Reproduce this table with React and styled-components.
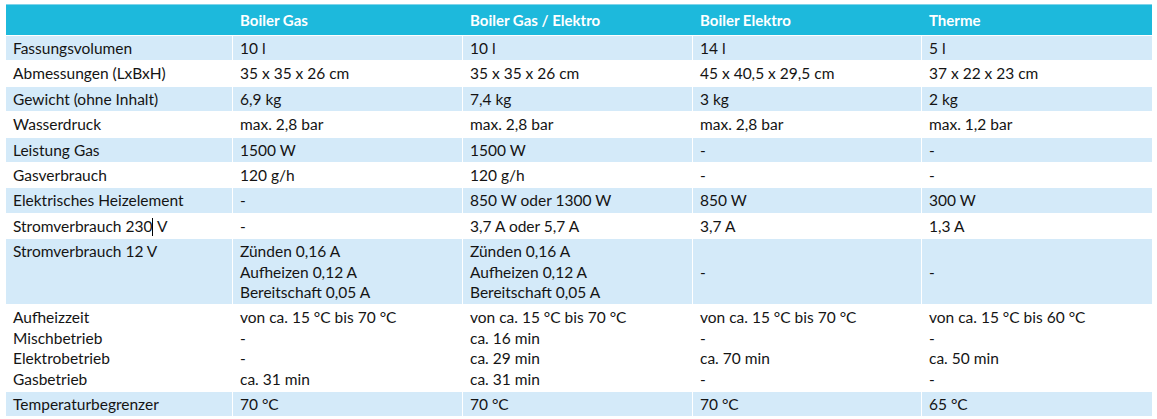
import React from "react";
import styled, { createGlobalStyle } from "styled-components";

const Global = createGlobalStyle`
  html, body { margin: 0; padding: 0; background: #ffffff; }
  body { font-family: Lato, "Open Sans", "Liberation Sans", sans-serif; }
`;

const Page = styled.div`
  padding: 4px 0 0 6px;
`;

const Table = styled.table`
  width: 1146px;
  table-layout: fixed;
  border-collapse: separate;
  border-spacing: 0;
  font-size: 15.5px;
  color: #141414;
`;

const HeadCell = styled.th`
  background: #1db9dc;
  color: #ffffff;
  font-weight: 700;
  font-size: 15px;
  text-align: left;
  height: 30px;
  padding: 0 7px;
  line-height: 20px;
  vertical-align: middle;
  border-bottom: 1px solid #ffffff;
  border-top: 1px solid #7fd4ea;
`;

const Row = styled.tr`
  background: ${(p) => (p.$shaded ? "#d4eaf9" : "#ffffff")};
`;

const Cell = styled.td`
  padding: 2px 7px 2px 7px;
  line-height: 20.4px;
  vertical-align: top;
  text-align: left;
  border-bottom: 1px solid #ffffff;
  border-right: ${(p) => (p.$last ? "none" : "1px solid #ffffff")};
  white-space: nowrap;
`;

const Line = styled.div`
  height: 20.4px;
`;

const Caret = styled.span`
  display: inline-block;
  width: 1px;
  height: 18px;
  background: #000;
  vertical-align: -4px;
`;

const headers = ["", "Boiler Gas", "Boiler Gas / Elektro", "Boiler Elektro", "Therme"];
const widths = [227, 230, 230, 229, 230];

const rows = [
  { shaded: true, cells: ["Fassungsvolumen", "10 l", "10 l", "14 l", "5 l"] },
  { cells: ["Abmessungen (LxBxH)", "35 x 35 x 26 cm", "35 x 35 x 26 cm", "45 x 40,5 x 29,5 cm", "37 x 22 x 23 cm"] },
  { shaded: true, cells: ["Gewicht (ohne Inhalt)", "6,9 kg", "7,4 kg", "3 kg", "2 kg"] },
  { cells: ["Wasserdruck", "max. 2,8 bar", "max. 2,8 bar", "max. 2,8 bar", "max. 1,2 bar"] },
  { shaded: true, cells: ["Leistung Gas", "1500 W", "1500 W", "-", "-"] },
  { cells: ["Gasverbrauch", "120 g/h", "120 g/h", "-", "-"] },
  { shaded: true, cells: ["Elektrisches Heizelement", "-", "850 W oder 1300 W", "850 W", "300 W"] },
  { cells: ["caret", "-", "3,7 A oder 5,7 A", "3,7 A", "1,3 A"] },
  {
    shaded: true,
    cells: [
      ["Stromverbrauch 12 V"],
      ["Zünden 0,16 A", "Aufheizen 0,12 A", "Bereitschaft 0,05 A"],
      ["Zünden 0,16 A", "Aufheizen 0,12 A", "Bereitschaft 0,05 A"],
      [" ", "-"],
      [" ", "-"],
    ],
  },
  {
    cells: [
      ["Aufheizzeit", "Mischbetrieb", "Elektrobetrieb", "Gasbetrieb"],
      ["von ca. 15 °C bis 70 °C", "-", "-", "ca. 31 min"],
      ["von ca. 15 °C bis 70 °C", "ca. 16 min", "ca. 29 min", "ca. 31 min"],
      ["von ca. 15 °C bis 70 °C", "-", "ca. 70 min", "-"],
      ["von ca. 15 °C bis 60 °C", "-", "ca. 50 min", "-"],
    ],
  },
  { shaded: true, cells: ["Temperaturbegrenzer", "70 °C", "70 °C", "70 °C", "65 °C"] },
];

function renderContent(c) {
  if (c === "caret") {
    return (
      <>
        Stromverbrauch 230<Caret /> V
      </>
    );
  }
  if (Array.isArray(c)) {
    return c.map((l, i) => <Line key={i}>{l}</Line>);
  }
  return c;
}

export default function App() {
  return (
    <>
      <Global />
      <Page>
        <Table>
          <colgroup>
            {widths.map((w, i) => (
              <col key={i} style={{ width: w }} />
            ))}
          </colgroup>
          <thead>
            <tr>
              {headers.map((h, i) => (
                <HeadCell key={i}>{h}</HeadCell>
              ))}
            </tr>
          </thead>
          <tbody>
            {rows.map((r, ri) => (
              <Row key={ri} $shaded={r.shaded}>
                {r.cells.map((c, ci) => (
                  <Cell key={ci} $last={ci === r.cells.length - 1}>
                    {renderContent(c)}
                  </Cell>
                ))}
              </Row>
            ))}
          </tbody>
        </Table>
      </Page>
    </>
  );
}
